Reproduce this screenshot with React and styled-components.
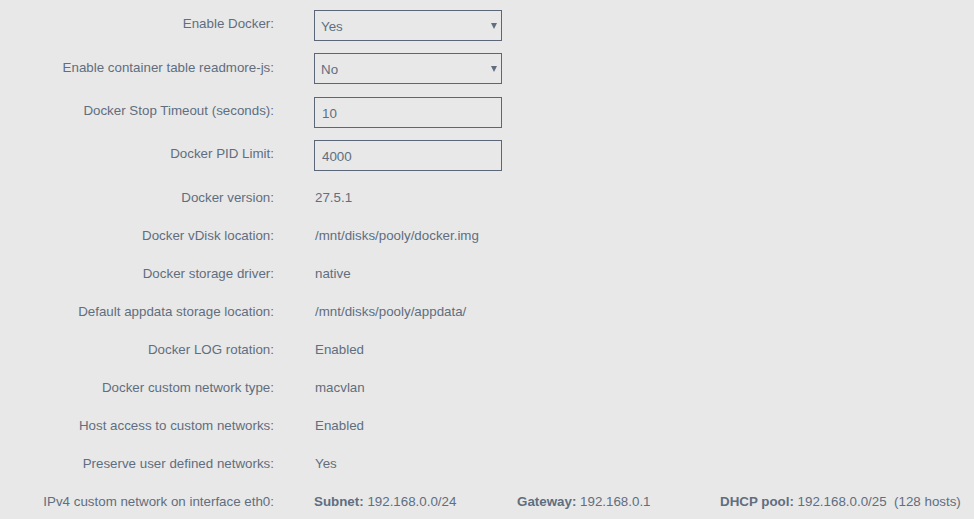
import React from 'react';
import styled, { createGlobalStyle } from 'styled-components';

const GlobalStyle = createGlobalStyle`
  html, body {
    margin: 0;
    padding: 0;
    background: #e8e8e8;
  }
  body {
    font-family: "Liberation Sans", Arial, sans-serif;
    font-size: 13.35px;
    color: #606e7f;
  }
`;

const Page = styled.div`
  padding-top: 3.8px;
  width: 974px;
  height: 519px;
  overflow: hidden;
  box-sizing: border-box;
`;

const InfoList = styled.div`
  padding-top: 1px;
`;

const Row = styled.div`
  display: grid;
  grid-template-columns: 274px 1fr;
  column-gap: 40px;
  align-items: center;
  height: ${p => (p.$field ? '43.33px' : '38px')};
`;

const Label = styled.div`
  text-align: right;
  white-space: nowrap;
  padding-bottom: ${p => (p.$field ? '3px' : '0')};
`;

const Value = styled.div`
  white-space: pre;
  padding-left: 1px;
`;

const SelectWrap = styled.div`
  position: relative;
  width: 188px;
  height: 31px;

  &::after {
    content: '';
    position: absolute;
    right: 5px;
    top: 13px;
    border-left: 3px solid transparent;
    border-right: 3px solid transparent;
    border-top: 6px solid #606e7f;
    pointer-events: none;
  }
`;

const Select = styled.select`
  display: block;
  appearance: none;
  -webkit-appearance: none;
  width: 188px;
  height: 31px;
  box-sizing: border-box;
  border: 1px solid #5b6679;
  border-radius: 0;
  background: #e8e8e8;
  color: #606e7f;
  font: inherit;
  padding: 2px 6px 0;
  margin: 0;
  outline: none;
`;

const Input = styled.input`
  display: block;
  width: 188px;
  height: 31px;
  box-sizing: border-box;
  border: 1px solid #5b6679;
  border-radius: 0;
  background: #e8e8e8;
  color: #606e7f;
  font: inherit;
  padding: 2px 7px 0;
  margin: 0;
  outline: none;
`;

const NetGrid = styled.div`
  display: grid;
  grid-template-columns: 203px 203px auto;
  white-space: pre;
`;

const Key = styled.b`
  font-weight: 700;
`;

const selects = [
  { label: 'Enable Docker:', value: 'Yes', options: ['Yes', 'No'] },
  { label: 'Enable container table readmore-js:', value: 'No', options: ['Yes', 'No'] },
];

const inputs = [
  { label: 'Docker Stop Timeout (seconds):', value: '10' },
  { label: 'Docker PID Limit:', value: '4000' },
];

const info = [
  ['Docker version:', '27.5.1'],
  ['Docker vDisk location:', '/mnt/disks/pooly/docker.img'],
  ['Docker storage driver:', 'native'],
  ['Default appdata storage location:', '/mnt/disks/pooly/appdata/'],
  ['Docker LOG rotation:', 'Enabled'],
  ['Docker custom network type:', 'macvlan'],
  ['Host access to custom networks:', 'Enabled'],
  ['Preserve user defined networks:', 'Yes'],
];

export default function App() {
  return (
    <Page>
      <GlobalStyle />
      {selects.map(s => (
        <Row $field key={s.label}>
          <Label $field>{s.label}</Label>
          <SelectWrap>
            <Select defaultValue={s.value}>
              {s.options.map(o => (
                <option key={o}>{o}</option>
              ))}
            </Select>
          </SelectWrap>
        </Row>
      ))}
      {inputs.map(i => (
        <Row $field key={i.label}>
          <Label $field>{i.label}</Label>
          <Input type="text" defaultValue={i.value} />
        </Row>
      ))}
      <InfoList>
        {info.map(([label, value]) => (
          <Row key={label}>
            <Label>{label}</Label>
            <Value>{value}</Value>
          </Row>
        ))}
        <Row>
          <Label>IPv4 custom network on interface eth0:</Label>
          <NetGrid>
            <span><Key>Subnet:</Key> 192.168.0.0/24</span>
            <span><Key>Gateway:</Key> 192.168.0.1</span>
            <span><Key>DHCP pool:</Key> 192.168.0.0/25  (128 hosts)</span>
          </NetGrid>
        </Row>
      </InfoList>
    </Page>
  );
}
